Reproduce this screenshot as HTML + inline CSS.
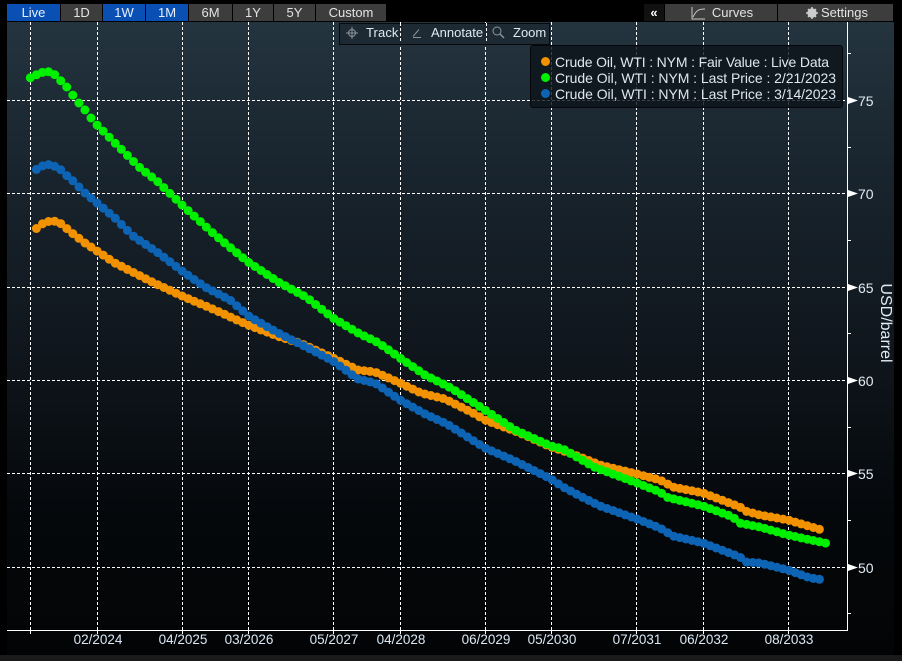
<!DOCTYPE html>
<html><head><meta charset="utf-8"><style>
html,body{margin:0;padding:0;background:#000;width:902px;height:661px;overflow:hidden}
body{position:relative;font-family:"Liberation Sans",sans-serif;color:#dfe9f2;font-size:13px}
.t{position:absolute;top:4px;height:17px;line-height:17px;background:#3d3d3d;text-align:center;color:#e4e4e4;font-size:13px}
.b{background:#0a50b4;color:#e8f0fa}
.p{position:absolute;left:7px;top:22px;width:887px;height:633px;background:linear-gradient(#24343f 0,#1a2630 20%,#10171e 50%,#05080b 78%,#030405 100%)}
.s{position:absolute;left:0;right:0;top:655px;height:6px;background:#1a1a1a}
svg{position:absolute;left:0;top:0}
.l{position:absolute;white-space:nowrap}
.d{top:632px;width:70px;text-align:center;font-size:13.500px;line-height:16px;color:#dbe8f5}
.y{left:858px;font-size:14px;line-height:16px;color:#e2ebf3}
.tb{position:absolute;left:339px;top:23px;width:209px;height:20px;background:#1e2a33;border:1px solid #07090b}
.lg{position:absolute;left:530px;top:45px;width:313px;height:63px;background:rgba(13,20,26,.8);border:1px solid #05070a;border-radius:3px;box-sizing:border-box}
.lt{left:555px;font-size:14px;line-height:16px;color:#dfe7ee}
.o{position:absolute;left:541px;width:9px;height:9px;border-radius:50%}
</style></head><body>
<div class="p"></div><div class="s"></div>
<div class="t b" style="left:7px;width:53px">Live</div>
<div class="t" style="left:61px;width:41px">1D</div>
<div class="t b" style="left:103px;width:42px">1W</div>
<div class="t b" style="left:146px;width:42px">1M</div>
<div class="t" style="left:189px;width:43px">6M</div>
<div class="t" style="left:233px;width:40px">1Y</div>
<div class="t" style="left:274px;width:41px">5Y</div>
<div class="t" style="left:316px;width:70px">Custom</div>
<div class="t" style="left:644px;width:20px;background:#111;font-weight:bold;color:#fff">«</div>
<div class="t" style="left:665px;width:112px;text-indent:23px">Curves</div>
<div class="t" style="left:778px;width:115px;text-indent:18px">Settings</div>

<svg width="902" height="661" viewBox="0 0 902 661">
<g stroke="#fff" stroke-width="1" fill="none">
<g stroke-dasharray="3 2">
<path d="M30.5 22V630M97.5 22V630M182.5 22V630M248.5 22V630M333.5 22V630M400.5 22V630M485.5 22V630M551.5 22V630M636.5 22V630M703.5 22V630M788.5 22V630"/>
<path d="M7 100.5H847M7 193.5H847M7 287.5H847M7 380.5H847M7 473.5H847M7 567.5H847"/>
</g>
<path d="M847.500 22V630.500H7"/>
<path d="M30.500 630V634M97.500 630V634M182.500 630V634M248.500 630V634M333.500 630V634M400.500 630V634M485.500 630V634M551.500 630V634M636.500 630V634M703.500 630V634M788.500 630V634"/>
<path d="M847 53.500H851M847 147.500H851M847 240.500H851M847 333.500H851M847 427.500H851M847 520.500H851M847 613.500H851"/>
</g>
<g fill="#fff"><path d="M848 97l10 3.500-10 3.500zM848 190l10 3.500-10 3.500zM848 284l10 3.500-10 3.500zM848 377l10 3.500-10 3.500zM848 470l10 3.500-10 3.500zM848 564l10 3.500-10 3.500z"/></g>
<g id="dots"></g>
</svg>
<script>
(function(){
var series=[
["#f39200",36.4,[37,228,42,224,48,221.5,54,221,60,223,66,228,72,233,85,243,97,251,115,263,150,281,182,296,215,310,248,325,280,337,300,343,333,358,358,370,375,372,400,383,421,393,445,399,473,413,485,420,520,433,551,447,570,453,600,465,637,474,660,480,673,487,703,493,740,507,745,511,760,515,788,520,825,531]],
["#0e64b4",36.4,[37,169,42,166,48,164.5,54,166,60,169,66,175,72,180,85,193,97,203,115,218,133,236,157,252,182,271,205,287,230,300,250,317,280,334,306,347,333,361,358,379,375,383,400,400,425,414,447,424,485,448,515,461,551,479,563,487,582,497,600,506,637,519,660,528,673,536,703,543,740,557,745,562,760,563,788,570,810,578,825,580]],
["#00f000",30.3,[30,78,36,75,42,72.5,48,71.5,54,74,60,80,66,86,72,94,78,102,85,110,91,118,97,125,103,131,121,149,139,167,157,181,182,205,215,235,248,262,280,283,306,297,333,318,360,334,375,341,383,346,400,358,425,375,451,388,485,410,515,430,551,446,563,449,594,467,637,483,660,492,666,497,703,506,733,517,739,523,760,527,788,535,825,543]]
];
var g=document.getElementById("dots"),ns="http://www.w3.org/2000/svg";
series.forEach(function(s){
var p=s[2],i=0;
for(var x=s[1];x<=825.5;x+=6.07){
while(i<p.length-4&&p[i+2]<x)i+=2;
var k=(x-p[i])/(p[i+2]-p[i]),y=p[i+1]+k*(p[i+3]-p[i+1]);
var c=document.createElementNS(ns,"circle");
c.setAttribute("cx",x.toFixed(1));c.setAttribute("cy",y.toFixed(1));c.setAttribute("r","4.5");c.setAttribute("fill",s[0]);
g.appendChild(c);
}
});
})();
</script>

<div class="tb"></div>
<svg width="902" height="661" viewBox="0 0 902 661" fill="none" stroke="#8b949b" stroke-width="1">
<path d="M400.500 23V43M486.500 23V43" stroke="#fff" stroke-dasharray="3 2"/>
<circle cx="352" cy="33" r="3.500"/><path d="M352 27V39M346 33H358"/>
<path d="M413 36.500L419 29.500M413 37.500H421"/>
<circle cx="497" cy="31" r="4"/><path d="M500 34L504 38" stroke-width="1.500"/>
<path d="M692 7V19H705M693 17C696 11 698 9 705 9" stroke="#c8c8c8"/>
<circle cx="812" cy="13" r="3.200" stroke="#ccc" stroke-width="3"/>
<path d="M812 7V19M806 13H818M808 9L816 17M816 9L808 17" stroke="#ccc" stroke-width="1.500"/>
</svg>
<div class="l" style="left:366px;top:25px;line-height:16px;font-size:13px;letter-spacing:.1px">Track</div>
<div class="l" style="left:431px;top:25px;line-height:16px;font-size:13px">Annotate</div>
<div class="l" style="left:513px;top:25px;line-height:16px;font-size:13px">Zoom</div>

<div class="lg"></div>
<div class="o" style="top:57px;background:#f39200"></div>
<div class="o" style="top:73px;background:#00f000"></div>
<div class="o" style="top:89px;background:#0e64b4"></div>
<div class="l lt" style="top:54px;letter-spacing:-.15px">Crude Oil, WTI : NYM : Fair Value : Live Data</div>
<div class="l lt" style="top:70px;letter-spacing:-.05px">Crude Oil, WTI : NYM : Last Price : 2/21/2023</div>
<div class="l lt" style="top:86px;letter-spacing:-.05px">Crude Oil, WTI : NYM : Last Price : 3/14/2023</div>

<div class="l y" style="top:93px">75</div>
<div class="l y" style="top:186px">70</div>
<div class="l y" style="top:280px">65</div>
<div class="l y" style="top:373px">60</div>
<div class="l y" style="top:466px">55</div>
<div class="l y" style="top:560px">50</div>
<div class="l" style="left:838px;top:315px;width:94px;text-align:center;font-size:16px;line-height:16px;transform:rotate(90deg);color:#e2ebf3">USD/barrel</div>

<div class="l d" style="left:63px">02/2024</div>
<div class="l d" style="left:148px">04/2025</div>
<div class="l d" style="left:214px">03/2026</div>
<div class="l d" style="left:299px">05/2027</div>
<div class="l d" style="left:366px">04/2028</div>
<div class="l d" style="left:451px">06/2029</div>
<div class="l d" style="left:517px">05/2030</div>
<div class="l d" style="left:602px">07/2031</div>
<div class="l d" style="left:669px">06/2032</div>
<div class="l d" style="left:754px">08/2033</div>
</body></html>
